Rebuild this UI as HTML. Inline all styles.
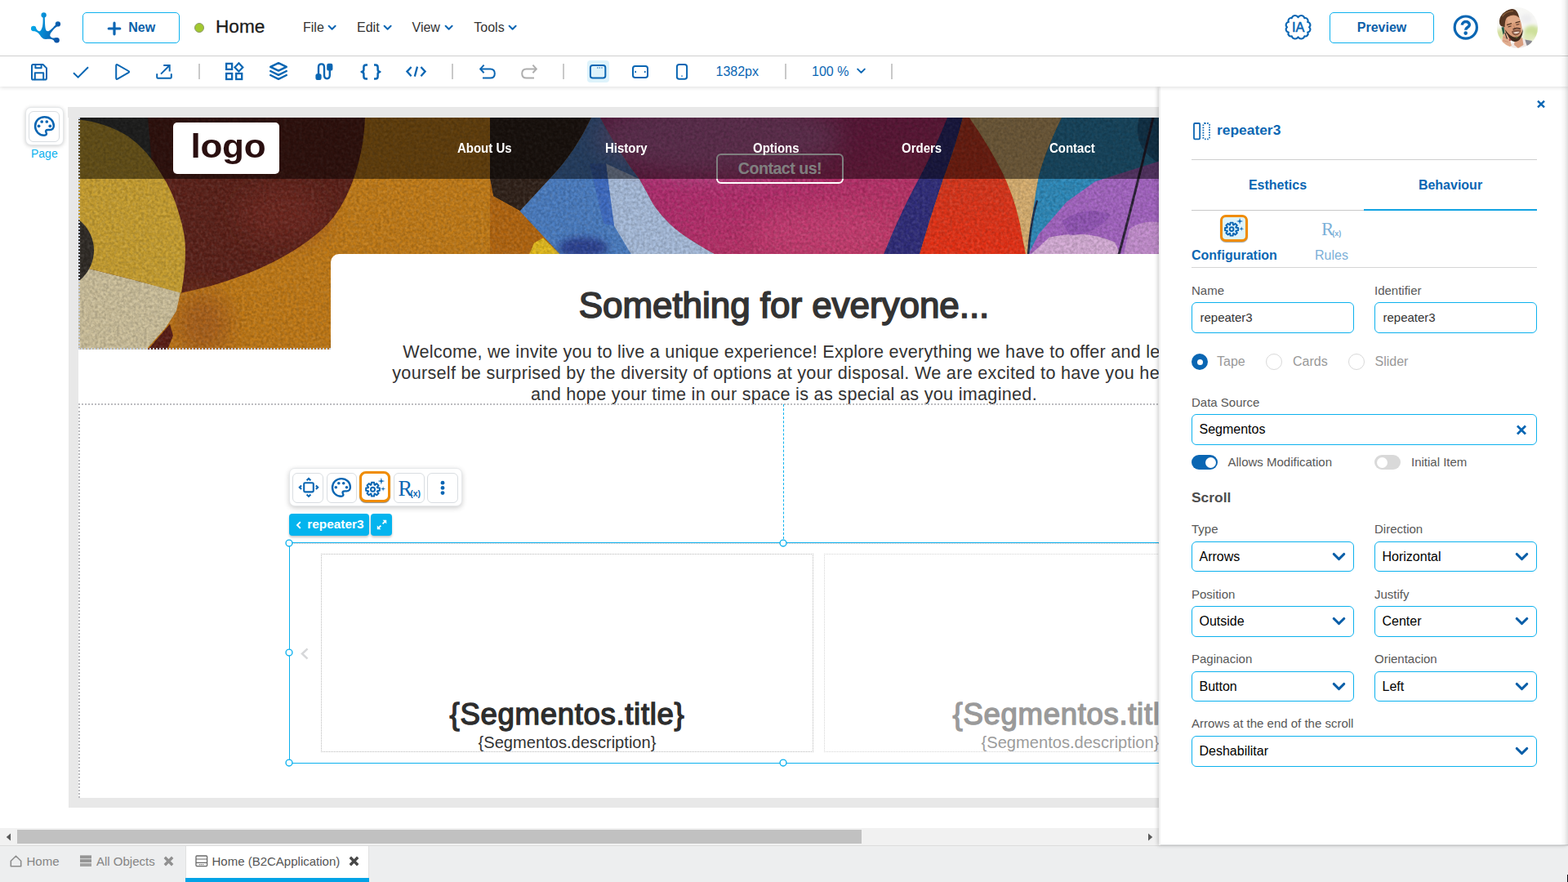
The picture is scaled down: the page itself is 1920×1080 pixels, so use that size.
<!DOCTYPE html>
<html lang="en">
<head>
<meta charset="utf-8">
<title>Home - Modeler</title>
<style>
*{box-sizing:border-box;margin:0;padding:0}
html,body{width:1920px;height:1080px;overflow:hidden;background:#fff;font-family:"Liberation Sans",sans-serif;color:#333}
.abs{position:absolute}
#app{position:relative;width:1920px;height:1080px;overflow:hidden;background:#fff}
/* ---------- header ---------- */
#hdr{position:absolute;left:0;top:0;width:1920px;height:69px;background:#fff;border-bottom:1px solid #cfcfcf}
.btn{position:absolute;border:1px solid #0cb1ee;border-radius:5px;background:#fff;color:#0b5fa9;font-weight:bold;font-size:16px;text-align:center}
.menu{position:absolute;top:24px;font-size:16px;color:#333;line-height:19px;white-space:nowrap}
/* ---------- toolbar ---------- */
#tb{position:absolute;left:0;top:69px;width:1920px;height:37px;background:#fff;box-shadow:0 1px 5px rgba(0,0,0,.14)}
.sep{position:absolute;top:10px;width:2px;height:18px;background:#c9c9c9}
.ic{position:absolute;overflow:visible}
/* ---------- work area ---------- */
#work{position:absolute;left:0;top:0;width:1419px;height:1035px;background:#fff;overflow:hidden}
#pedge{position:absolute;left:1419px;top:106px;width:2px;height:929px;background:#f1f1f1}
#fnotch{position:absolute;left:83px;top:131px;width:1px;height:13px;background:#e8e8e8}
#frame{position:absolute;left:84px;top:131px;width:1420px;height:858px;background:#e8e8e8}
#page{position:absolute;left:96px;top:144px;width:1382px;height:833px;background:#fff;overflow:hidden}
#page .a{position:absolute;white-space:nowrap}
.nav{color:#fff;font-weight:bold;font-size:16.3px;line-height:19px;transform:scaleX(.92);transform-origin:0 0}
.rb{font-family:"Liberation Sans",sans-serif}
/* ---------- right panel ---------- */
#panel{position:absolute;left:1420px;top:106px;width:500px;height:929px;background:#fff;box-shadow:-2px 0 5px rgba(0,0,0,.22);border-bottom:1px solid #dcdee0}
#rstrip{position:absolute;left:1911px;top:0;width:9px;height:1035px;background:linear-gradient(to right,rgba(0,0,0,0),rgba(0,0,0,.035) 50%,rgba(0,0,0,.13))}
#corner{position:absolute;left:1919px;top:1071px;width:1px;height:9px;background:#0a0a14}
.lbl{position:absolute;font-size:15px;color:#585858;line-height:17px;white-space:nowrap}
.inp{position:absolute;height:38px;border:1px solid #0cb1ee;border-radius:6px;background:#fff;font-size:15px;color:#333;line-height:36px;padding-left:9.5px;white-space:nowrap}
.sel{position:absolute;height:37px;border:1px solid #0cb1ee;border-radius:6px;background:#fff;font-size:16px;color:#000;line-height:35px;padding-left:8.5px;white-space:nowrap}
/* ---------- bottom ---------- */
#hscroll{position:absolute;left:0;top:1014px;width:1419px;height:21px;background:#f1f1f1}
#tabs{position:absolute;left:0;top:1035px;width:1920px;height:45px;background:#edeeef;border-top:1px solid #dcdcdc}
.tab{position:absolute;top:0;height:44px;font-size:15px;color:#858585;line-height:38px;white-space:nowrap}
</style>
</head>
<body>
<div id="app">
<svg width="0" height="0" style="position:absolute"><defs>
<symbol id="gearic" viewBox="0 0 26 26" overflow="visible">
 <path d="M8.53 9.64 L8.89 6.85 L12.11 6.85 L12.47 9.64 L13.04 9.88 L15.27 8.16 L17.54 10.43 L15.82 12.66 L16.06 13.23 L18.85 13.59 L18.85 16.81 L16.06 17.17 L15.82 17.74 L17.54 19.97 L15.27 22.24 L13.04 20.52 L12.47 20.76 L12.11 23.55 L8.89 23.55 L8.53 20.76 L7.96 20.52 L5.73 22.24 L3.46 19.97 L5.18 17.74 L4.94 17.17 L2.15 16.81 L2.15 13.59 L4.94 13.23 L5.18 12.66 L3.46 10.43 L5.73 8.16 L7.96 9.88Z" fill="none" stroke="#0a66b3" stroke-width="2" stroke-linejoin="round"/>
 <circle cx="10.5" cy="15.2" r="2.5" fill="none" stroke="#0a66b3" stroke-width="2"/>
 <path d="M20.90 0.80 L21.75 4.25 L25.20 5.10 L21.75 5.95 L20.90 9.40 L20.05 5.95 L16.60 5.10 L20.05 4.25Z" fill="#0a66b3"/>
 <path d="M23.10 11.60 L23.71 14.09 L26.20 14.70 L23.71 15.31 L23.10 17.80 L22.49 15.31 L20.00 14.70 L22.49 14.09Z" fill="#0a66b3"/>
</symbol>
<symbol id="palic" viewBox="0 0 26 26" overflow="visible">
 <path d="M13 2.1C6.6 2.1 2 6.9 2 13C2 19.2 6.8 23.8 12.6 23.8C15 23.8 16 22.4 15 20.6C13.8 18.6 14.8 17.4 17 17.4H19.6C22.2 17.4 23.9 15.4 23.9 12.6C23.9 6.6 19.4 2.1 13 2.1Z" fill="none" stroke="#0a66b3" stroke-width="2.4" stroke-linejoin="round"/>
 <circle cx="6.3" cy="12.8" r="1.8" fill="#0a66b3"/><circle cx="9.8" cy="7.7" r="1.8" fill="#0a66b3"/><circle cx="15.7" cy="7.7" r="1.8" fill="#0a66b3"/><circle cx="19.5" cy="12.8" r="1.8" fill="#0a66b3"/>
</symbol>

</defs></svg>

<!-- WORK AREA -->
<div id="work">
  <div id="frame"></div><div id="fnotch"></div>
  <div id="page">
<svg class="abs" style="left:0;top:0" width="1382" height="284" viewBox="96 144 1382 283" preserveAspectRatio="none">
 <defs>
  <filter id="grain" x="0" y="0" width="100%" height="100%">
   <feTurbulence type="fractalNoise" baseFrequency="0.3" numOctaves="2" seed="7" result="n"/>
   <feColorMatrix in="n" type="matrix" values="0 0 0 0 0  0 0 0 0 0  0 0 0 0 0  1.6 1.6 0 0 -1.15"/>
  </filter>
  <filter id="grain2" x="0" y="0" width="100%" height="100%">
   <feTurbulence type="fractalNoise" baseFrequency="0.27" numOctaves="2" seed="23" result="n"/>
   <feColorMatrix in="n" type="matrix" values="0 0 0 0 1  0 0 0 0 1  0 0 0 0 1  1.5 1.5 0 0 -1.2"/>
  </filter>
  <linearGradient id="gBlue" x1="0" y1="0" x2="1" y2="0"><stop offset="0" stop-color="#3f6fb8"/><stop offset=".45" stop-color="#5f8ccb"/><stop offset=".8" stop-color="#a9bdd9"/><stop offset="1" stop-color="#b9c6da"/></linearGradient>
  <linearGradient id="gMag" x1="0" y1="0" x2="1" y2="1"><stop offset="0" stop-color="#a52b73"/><stop offset=".5" stop-color="#b42d6c"/><stop offset="1" stop-color="#c23a62"/></linearGradient>
  <linearGradient id="gRed" x1="0" y1="0" x2="0" y2="1"><stop offset="0" stop-color="#c83b22"/><stop offset="1" stop-color="#ea3014"/></linearGradient>
  <linearGradient id="gOr" x1="0" y1="0" x2="1" y2="1"><stop offset="0" stop-color="#c5801a"/><stop offset="1" stop-color="#c07512"/></linearGradient>
  <filter id="soft2" x="-50%" y="-50%" width="200%" height="200%"><feGaussianBlur stdDeviation="4"/></filter>
  <filter id="soft" x="-50%" y="-50%" width="200%" height="200%"><feGaussianBlur stdDeviation="14"/></filter>
  <clipPath id="heroclip"><rect x="96" y="144" width="1382" height="283"/></clipPath>
 </defs>
 <g clip-path="url(#heroclip)">
  <rect x="96" y="144" width="1382" height="283" fill="url(#gOr)"/>
  <!-- maroon disc -->
  <path d="M96 144H447C445 200 425 250 400 275C370 305 310 340 222 358L96 340Z" fill="#5b2018"/>
  <ellipse cx="345" cy="262" rx="55" ry="35" fill="#7c2b21" opacity=".5" filter="url(#soft)"/>
  <!-- brownish shade under the disc -->
  <ellipse cx="248" cy="395" rx="34" ry="40" fill="#9a4f1c" opacity=".6" filter="url(#soft)"/>
  <!-- dark grey wedge top-left -->
  <path d="M96 144H181L186 200L96 200Z" fill="#3b3b3a"/>
  <!-- beige wedge (under ring edge) -->
  <path d="M96 325L160 341L221 357Q218 370 216 380L203 400L179 427H96Z" fill="#cfc29d"/>
  <path d="M208 396L212 410L205 427H181Z" fill="#5a1d15"/>
  <!-- yellow ring -->
  <path d="M96 146.5Q130 150 157 167Q181 184 197 212Q212 235 219 261Q227 285 227 306Q227 330 222 358L160 341L96 325Z" fill="#c9a030"/>
  <circle cx="68" cy="306" r="47" fill="#2f2a25"/>
  <!-- dark region -->
  <path d="M600 144H724Q705 185 675 217L637 258L604 240L600 219Z" fill="#2f2018"/>
  <path d="M600 219L604 240L637 258L686 311H600Z" fill="#b4660f"/>
  <path d="M654 297L665 291L686 311H648Z" fill="#e6bd1c"/>
  <!-- blue -->
  <path d="M724 144H735Q760 190 783 219Q792 235 799.4 249Q808 262 819.7 273.3Q832 285 846.8 293.6Q858 301 876 311H686L636.5 258L674.6 217Q705 185 724 144Z" fill="#4a7dc2"/>
  <path d="M742 200L783 219Q792 235 799.4 249Q808 262 819.7 273.3Q832 285 846.8 293.6Q858 301 876 311H773L752 276Q747 240 742 200Z" fill="#a9bedd"/>
  <path d="M722 200L742 200Q747 240 752 276L739 273Q730 235 722 200Z" fill="#3c68c4" opacity=".85"/>
  <ellipse cx="714" cy="303" rx="30" ry="13" fill="#27378a" opacity=".85" filter="url(#soft2)"/>
  <!-- magenta -->
  <path d="M735 144H1165L1085 311H876Q858 301 846.8 293.6Q832 285 819.7 273.3Q808 262 799.4 249Q792 235 783 219Q760 190 735 144Z" fill="url(#gMag)"/>
  <ellipse cx="880" cy="168" rx="150" ry="45" fill="#c583bd" opacity=".55" filter="url(#soft)"/>
  <ellipse cx="1010" cy="285" rx="90" ry="30" fill="#d0457a" opacity=".5" filter="url(#soft)"/>
  <!-- navy stripe -->
  <path d="M1160 144H1179Q1170 180 1155 219Q1138 270 1126 311H1082Q1100 265 1125 219Q1148 175 1160 144Z" fill="#2f2c7a"/>
  <!-- red leaf -->
  <path d="M1179 144H1187Q1212 180 1228 212Q1246 250 1252 290L1256 311H1126Q1138 270 1155 219Q1170 180 1179 144Z" fill="url(#gRed)"/>
  <!-- cream -->
  <path d="M1187 144H1300Q1280 185 1272 215Q1263 262 1259 311H1256L1252 290Q1246 250 1228 212Q1212 180 1187 144Z" fill="#dab171"/>
  <!-- teal -->
  <path d="M1300 144H1478V311H1259Q1263 262 1272 215Q1280 185 1300 144Z" fill="#2d8abb"/>
  <path d="M1395 144H1478V200H1420Q1385 180 1395 144Z" fill="#1f5f8a"/>
  <!-- purple -->
  <path d="M1478 176L1420 197L1341 222L1306 247L1272 286L1259 311H1478Z" fill="#a565c3"/>
  <path d="M1262 311L1285 290Q1330 280 1365 296L1372 311Z" fill="#d7aed8"/>
  <path d="M1376 311L1383 280Q1400 268 1420 272V311Z" fill="#c58fd0"/>
  <path d="M1300 270Q1330 250 1360 262Q1345 285 1310 288Z" fill="#8a4eb0" opacity=".7"/>
  <path d="M1412 144Q1392 230 1370 311" stroke="#2b2136" stroke-width="3" fill="none"/>
  <path d="M1259 311Q1262 270 1270 245" stroke="#1d2c4a" stroke-width="2.5" fill="none"/>
  <!-- grain texture -->
  <rect x="96" y="144" width="1382" height="283" fill="#000" filter="url(#grain)" opacity=".17"/>
  <rect x="96" y="144" width="1382" height="283" fill="#fff" filter="url(#grain2)" opacity=".09"/>
 </g>
</svg>
<!-- contact button (sits beneath nav overlay) -->
<div class="a" style="left:781px;top:44px;width:156px;height:37px;border:2px solid #fff;border-radius:6px;color:#fff;font-weight:bold;font-size:19.6px;line-height:32px;text-align:center;letter-spacing:-.5px">Contact us!</div>
<!-- nav overlay -->
<div class="a" style="left:0;top:0;width:1382px;height:75px;background:rgba(0,0,0,.5)"></div>
<div class="a" style="left:116px;top:6px;width:130px;height:63px;background:#fff;border-radius:5px"></div>
<div class="a" id="logo" style="left:137.6px;top:9.2px;font-weight:bold;font-size:44px;line-height:50px;color:#2a0f10;letter-spacing:-.3px;transform:scaleY(.925);transform-origin:0 40.5px">logo</div>
<div class="a nav" id="n1" style="left:464px;top:27.6px">About Us</div>
<div class="a nav" id="n2" style="left:645px;top:27.6px">History</div>
<div class="a nav" id="n3" style="left:826px;top:27.6px">Options</div>
<div class="a nav" id="n4" style="left:1007.5px;top:27.6px">Orders</div>
<div class="a nav" id="n5" style="left:1189px;top:27.6px">Contact</div>
<!-- left dotted edge of hero -->
<div class="a" style="left:0;top:0;width:0;height:284px;border-left:2px dotted #c8d0e0"></div>
<div class="a" style="left:0;top:282px;width:309px;height:0;border-top:2px dotted #c8d0e0"></div>

<!-- white card -->
<div class="a" style="left:309px;top:167px;width:1100px;height:200px;background:#fff;border-radius:10px 0 0 0"></div>
<div class="a" id="h1" style="left:0;top:200px;width:1728px;text-align:center;font-size:44px;line-height:60px;color:#333;letter-spacing:-.05px;-webkit-text-stroke:1.7px #333;paint-order:stroke fill">Something for everyone...</div>
<div class="a" id="p1" style="left:0;top:274px;width:1728px;text-align:center;font-size:21.6px;line-height:26px;color:#333;letter-spacing:.245px">Welcome, we invite you to live a unique experience! Explore everything we have to offer and let</div>
<div class="a" id="p2" style="left:0;top:300px;width:1728px;text-align:center;font-size:21.6px;line-height:26px;color:#333;letter-spacing:.3px">yourself be surprised by the diversity of options at your disposal. We are excited to have you here</div>
<div class="a" id="p3" style="left:0;top:326px;width:1728px;text-align:center;font-size:21.6px;line-height:26px;color:#333;letter-spacing:.3px">and hope your time in our space is as special as you imagined.</div>
<!-- section dotted borders -->
<div class="a" style="left:0;top:350px;width:1382px;height:0;border-top:2px dotted #bcbcc0"></div>
<div class="a" style="left:0;top:354px;width:0;height:479px;border-left:2px dotted #bcbcc0"></div>
<div class="a" style="left:863px;top:351px;width:0;height:170px;border-left:1px dashed #0cb1ee"></div>
<div class="a" style="left:258px;top:429px;width:212px;height:47px;background:#fff;border:1px solid #e6e8ea;border-radius:7px;box-shadow:0 2px 6px rgba(0,0,0,.2)"></div>
<div class="a" style="left:262.2px;top:434.5px;width:37.4px;height:37.4px;background:#fff;border:1px solid #d9dde1;border-radius:6px"></div>
<div class="a" style="left:304.1px;top:434.5px;width:37.4px;height:37.4px;background:#fff;border:1px solid #d9dde1;border-radius:6px"></div>
<div class="a" style="left:386.2px;top:434.5px;width:37.4px;height:37.4px;background:#fff;border:1px solid #d9dde1;border-radius:6px"></div>
<div class="a" style="left:427.4px;top:434.5px;width:37.4px;height:37.4px;background:#fff;border:1px solid #d9dde1;border-radius:6px"></div>
<div class="a" style="left:344.3px;top:433.2px;width:37.6px;height:38.2px;background:#fff;border:3.4px solid #f08c00;border-radius:8px;box-shadow:0 1px 1px rgba(0,0,0,.45)"></div>
<svg class="a" style="left:268.5px;top:440px" width="26" height="26" viewBox="0 0 26 26" overflow="visible">
 <rect x="7.2" y="7.2" width="11.6" height="11.2" rx="1.4" fill="none" stroke="#0a66b3" stroke-width="2.1"/>
 <path d="M10.6 4.2L13 1.9L15.4 4.2M10.6 21.6L13 23.9L15.4 21.6M4.1 10.5L1.8 12.8L4.1 15.1M21.9 10.5L24.2 12.8L21.9 15.1" fill="none" stroke="#0a66b3" stroke-width="2.1" stroke-linejoin="miter"/>
</svg>
<svg class="a" style="left:309px;top:440.3px" width="26" height="26" viewBox="0 0 26 26" overflow="visible"><use href="#palic"/></svg>
<svg class="a" style="left:350px;top:440px" width="26" height="26" viewBox="0 0 26 26" overflow="visible"><use href="#gearic"/></svg>
<div class="a" style="left:391.5px;top:438.5px;font-family:'Liberation Serif',serif;font-size:26.5px;line-height:30px;color:#0a66b3;letter-spacing:-1px">R<span style="font-family:'Liberation Sans',sans-serif;font-size:10.5px;font-weight:bold;letter-spacing:0;position:relative;top:1.5px;left:-2px">(x)</span></div>
<svg class="a" style="left:442.5px;top:444px" width="6" height="19" viewBox="0 0 6 19"><circle cx="3" cy="3.2" r="2.4" fill="#0a66b3"/><circle cx="3" cy="9.4" r="2.4" fill="#0a66b3"/><circle cx="3" cy="15.6" r="2.4" fill="#0a66b3"/></svg>
<div class="a" style="left:258px;top:485.1px;width:98px;height:27px;background:#04b4ee;border-radius:4px;box-shadow:0 2px 3px rgba(0,0,0,.22)"></div>
<svg class="a" style="left:265.5px;top:493.5px" width="8" height="10" viewBox="0 0 8 10"><path d="M5.8 1.2L2 5L5.8 8.8" fill="none" stroke="#fff" stroke-width="1.9"/></svg>
<div class="a" id="tagtxt" style="left:280.2px;top:488.9px;color:#fff;font-weight:bold;font-size:15.4px;line-height:18px">repeater3</div>
<div class="a" style="left:358.2px;top:485.1px;width:26px;height:27px;background:#04b4ee;border-radius:4px;box-shadow:0 2px 3px rgba(0,0,0,.22)"></div>
<svg class="a" style="left:363.6px;top:491.2px" width="15" height="15" viewBox="0 0 15 15"><path d="M3.6 11.4L6.4 8.6M8.6 6.4L11.4 3.6" stroke="#fff" stroke-width="1.8" fill="none"/><path d="M8.6 1.8H13.2V6.4ZM1.8 8.6V13.2H6.4Z" fill="#fff"/></svg>
<div class="a" style="left:259px;top:521px;width:1210px;height:269px;border-top:1px dotted #c8bcbc"></div>
<div class="a" style="left:258px;top:520px;width:1212px;height:271px;border:1px solid #0cb1ee"></div>
<div class="a" style="left:297px;top:534px;width:603px;height:243px;border:1px dotted #b9b9b9"></div>
<div class="a" style="left:913px;top:534px;width:603px;height:243px;border:1px dotted #d5d5d5"></div>
<svg class="a" style="left:252.4px;top:514.9px" width="12" height="12" viewBox="0 0 12 12"><circle cx="6" cy="6" r="3.95" fill="#fff" stroke="#0cb1ee" stroke-width="1.35"/></svg>
<svg class="a" style="left:857.4px;top:514.9px" width="12" height="12" viewBox="0 0 12 12"><circle cx="6" cy="6" r="3.95" fill="#fff" stroke="#0cb1ee" stroke-width="1.35"/></svg>
<svg class="a" style="left:252.4px;top:649.4px" width="12" height="12" viewBox="0 0 12 12"><circle cx="6" cy="6" r="3.95" fill="#fff" stroke="#0cb1ee" stroke-width="1.35"/></svg>
<svg class="a" style="left:252.4px;top:784.4px" width="12" height="12" viewBox="0 0 12 12"><circle cx="6" cy="6" r="3.95" fill="#fff" stroke="#0cb1ee" stroke-width="1.35"/></svg>
<svg class="a" style="left:857.4px;top:784.4px" width="12" height="12" viewBox="0 0 12 12"><circle cx="6" cy="6" r="3.95" fill="#fff" stroke="#0cb1ee" stroke-width="1.35"/></svg>
<svg class="a" style="left:271px;top:647.6px" width="12" height="17" viewBox="0 0 12 17"><path d="M9.5 2.4L3 8.5L9.5 14.6" fill="none" stroke="#d6d7d9" stroke-width="2.5"/></svg>
<div class="a" id="t1" style="left:297px;top:709px;width:603px;text-align:center;font-size:36.6px;line-height:44px;color:#2d2d2d;letter-spacing:.66px;-webkit-text-stroke:1.4px #2d2d2d;paint-order:stroke fill">{Segmentos.title}</div>
<div class="a" id="d1" style="left:297px;top:753px;width:603px;text-align:center;font-size:20.1px;line-height:24px;color:#333">{Segmentos.description}</div>
<div class="a" id="t2" style="left:913px;top:709px;width:603px;text-align:center;font-size:36.6px;line-height:44px;color:#9a9a9a;letter-spacing:.66px;-webkit-text-stroke:1.4px #9a9a9a;paint-order:stroke fill">{Segmentos.title}</div>
<div class="a" id="d2" style="left:913px;top:753px;width:603px;text-align:center;font-size:20.1px;line-height:24px;color:#9c9c9c">{Segmentos.description}</div>


  </div>
<div class="abs" style="left:31px;top:130.6px;width:47.2px;height:47.2px;background:#fff;border:1px solid #e4e6e8;border-radius:7px;box-shadow:0 1px 5px rgba(0,0,0,.2)"></div>
<div class="abs" style="left:35.3px;top:136.2px;width:37.6px;height:37.6px;background:#fff;border:1px solid #d9dde1;border-radius:6px"></div>
<svg class="abs" style="left:41px;top:141.2px" width="27" height="27" viewBox="0 0 26 26" overflow="visible"><use href="#palic"/></svg>
<div class="abs" style="left:38px;top:180px;font-size:14px;line-height:17px;color:#0cb1ee;white-space:nowrap">Page</div>

</div>

<!-- BOTTOM -->
<div id="hscroll"><div class="abs" style="left:21px;top:2px;width:1034px;height:17px;background:#c1c1c1"></div>
<svg class="abs" style="left:7px;top:5.5px" width="7" height="10" viewBox="0 0 7 10"><path d="M6 .5V9.5L.8 5Z" fill="#5a5a5a"/></svg>
<svg class="abs" style="left:1405px;top:5.5px" width="7" height="10" viewBox="0 0 7 10"><path d="M1 .5V9.5L6.2 5Z" fill="#5a5a5a"/></svg>
</div>
<div id="tabs"><svg class="abs" style="left:12px;top:10.6px" width="15" height="15" viewBox="0 0 15 15"><path d="M1.3 7.3L7.5 1.2L13.7 7.3V13.7H1.3Z" fill="none" stroke="#8e8e8e" stroke-width="1.6" stroke-linejoin="round"/></svg>
<div class="tab" style="left:32.5px;top:0">Home</div>
<svg class="abs" style="left:97px;top:11px" width="16" height="14" viewBox="0 0 16 14"><path d="M1 1.4H15M1 3.4H15M1 6.2H15M1 8.2H15M1 11H15M1 13H15" stroke="#8a8a8a" stroke-width="1.7"/></svg>
<div class="tab" style="left:118px;top:0">All Objects</div>
<svg class="abs" style="left:200px;top:12px" width="13" height="13" viewBox="0 0 13 13"><path d="M1.8 1.8L11.2 11.2M11.2 1.8L1.8 11.2" stroke="#909090" stroke-width="3.4" fill="none"/></svg>
<div class="abs" style="left:227px;top:0;width:224.5px;height:45px;background:#fff;border-left:1px solid #e1e1e1;border-right:1px solid #e1e1e1"></div>
<div class="abs" style="left:227px;top:39px;width:224.5px;height:6px;background:#03a3e6"></div>
<svg class="abs" style="left:238.5px;top:10.5px" width="16" height="15" viewBox="0 0 16 15"><rect x="1" y="1" width="13.6" height="12.6" rx="1" fill="none" stroke="#6a6a6a" stroke-width="1.3"/><path d="M1 5H14.6M1 9.4H14.6" stroke="#6a6a6a" stroke-width="1.1"/><path d="M5 11.6H10.6" stroke="#6a6a6a" stroke-width="1.2" stroke-dasharray="1.4 .8"/></svg>
<div class="tab" style="left:259.5px;top:0;color:#555">Home (B2CApplication)</div>
<svg class="abs" style="left:427px;top:12px" width="13" height="13" viewBox="0 0 13 13"><path d="M1.8 1.8L11.2 11.2M11.2 1.8L1.8 11.2" stroke="#484848" stroke-width="3.4" fill="none"/></svg>
</div>

<!-- RIGHT PANEL -->
<div id="panel"><svg class="ic" style="left:461px;top:15.5px" width="12" height="11" viewBox="0 0 12 11"><path d="M2 1.6L10 9.4M10 1.6L2 9.4" stroke="#0a66b3" stroke-width="2.4" fill="none"/></svg>
<svg class="ic" style="left:40px;top:43px" width="24" height="24" viewBox="0 0 24 24">
 <rect x="2" y="2" width="7.2" height="19.4" rx="1.2" fill="none" stroke="#0a66b3" stroke-width="1.8"/>
 <rect x="13.4" y="2" width="7.6" height="19.4" rx="1.6" fill="none" stroke="#0a66b3" stroke-width="1.8" stroke-dasharray="1.6 1.5"/>
</svg>
<div class="abs" style="left:70px;top:43.2px;font-size:17.4px;font-weight:bold;color:#0a66b3;line-height:20px;white-space:nowrap">repeater3</div>
<div class="abs" style="left:39px;top:89px;width:423px;height:1px;background:#cfcfcf"></div>
<div class="abs" style="left:39px;top:111px;width:211px;text-align:center;font-size:16px;font-weight:bold;color:#0a66b3;line-height:19px">Esthetics</div>
<div class="abs" style="left:250px;top:111px;width:212px;text-align:center;font-size:16px;font-weight:bold;color:#0a66b3;line-height:19px">Behaviour</div>
<div class="abs" style="left:39px;top:150.5px;width:423px;height:1px;background:#c9c9c9"></div>
<div class="abs" style="left:250px;top:150px;width:212px;height:2px;background:#12a3e2"></div>
<div class="abs" style="left:74px;top:157px;width:34px;height:33px;border:3px solid #f08c00;border-radius:7px;background:#dff3fb;box-shadow:0 1px 1px rgba(0,0,0,.35)"></div>
<svg class="ic" style="left:78.3px;top:160.3px" width="25" height="25" viewBox="0 0 26 26"><use href="#gearic"/></svg>
<div class="abs" style="left:39px;top:196.5px;font-size:16px;font-weight:bold;color:#0a66b3;line-height:19px;white-space:nowrap">Configuration</div>
<div class="abs" style="left:198px;top:161.5px;font-family:'Liberation Serif',serif;font-size:23px;line-height:26px;color:#7cb0d8;white-space:nowrap;letter-spacing:-1px">R<span style="font-family:'Liberation Sans',sans-serif;font-size:9px;font-weight:bold;letter-spacing:0;position:relative;top:1px;left:-1px">(x)</span></div>
<div class="abs" style="left:190px;top:196.5px;font-size:16px;color:#7cb0d8;line-height:19px;white-space:nowrap">Rules</div>
<div class="abs" style="left:39px;top:221px;width:423px;height:1px;background:#d5d5d5"></div>
<div class="lbl" style="left:39px;top:241.3px">Name</div>
<div class="lbl" style="left:263px;top:241.3px">Identifier</div>
<div class="inp" style="left:39px;top:264px;width:199px">repeater3</div>
<div class="inp" style="left:263px;top:264px;width:199px">repeater3</div>
<div class="abs" style="left:39px;top:327px;width:20px;height:20px;border-radius:50%;background:#0a66b3"></div><div class="abs" style="left:45.5px;top:333.5px;width:7px;height:7px;border-radius:50%;background:#fff"></div><div class="abs" style="left:70px;top:327px;font-size:16px;line-height:19px;color:#999;white-space:nowrap">Tape</div>
<div class="abs" style="left:130px;top:327px;width:20px;height:20px;border-radius:50%;background:#fff;border:1px solid #d9d9d9"></div><div class="abs" style="left:163px;top:327px;font-size:16px;line-height:19px;color:#999;white-space:nowrap">Cards</div>
<div class="abs" style="left:231px;top:327px;width:20px;height:20px;border-radius:50%;background:#fff;border:1px solid #d9d9d9"></div><div class="abs" style="left:263.5px;top:327px;font-size:16px;line-height:19px;color:#999;white-space:nowrap">Slider</div>
<div class="lbl" style="left:39px;top:377.9px">Data Source</div>
<div class="sel" style="left:39px;top:401px;width:423px;height:38px;line-height:35px">Segmentos<svg class="ic" style="right:11px;top:12px" width="14" height="13" viewBox="0 0 14 13"><path d="M2 1.6L12 11.4M12 1.6L2 11.4" stroke="#0a66b3" stroke-width="2.8" fill="none"/></svg></div>
<div class="abs" style="left:39px;top:451px;width:32px;height:18px;border-radius:9px;background:#0a66b3"></div>
<div class="abs" style="left:55.5px;top:453.5px;width:13px;height:13px;border-radius:50%;background:#fff"></div>
<div class="lbl" style="left:83.5px;top:450.8px">Allows Modification</div>
<div class="abs" style="left:263px;top:451px;width:32px;height:18px;border-radius:9px;background:#d9d9d9"></div>
<div class="abs" style="left:265.5px;top:453.5px;width:13px;height:13px;border-radius:50%;background:#fff"></div>
<div class="lbl" style="left:308px;top:450.8px">Initial Item</div>
<div class="abs" style="left:39px;top:492.8px;font-size:17.4px;font-weight:bold;color:#4d4d4d;line-height:20px;white-space:nowrap">Scroll</div>
<div class="lbl" style="left:39px;top:533.3px">Type</div>
<div class="lbl" style="left:263px;top:533.3px">Direction</div>
<div class="sel" style="left:39px;top:557px;width:199px;height:37px">Arrows<svg class="ic" style="right:9px;top:12px" width="17" height="12" viewBox="0 0 17 12"><path d="M2.2 2.4L8.5 8.6L14.8 2.4" fill="none" stroke="#0a5ea8" stroke-width="2.9" stroke-linecap="round" stroke-linejoin="round"/></svg></div>
<div class="sel" style="left:263px;top:557px;width:199px;height:37px">Horizontal<svg class="ic" style="right:9px;top:12px" width="17" height="12" viewBox="0 0 17 12"><path d="M2.2 2.4L8.5 8.6L14.8 2.4" fill="none" stroke="#0a5ea8" stroke-width="2.9" stroke-linecap="round" stroke-linejoin="round"/></svg></div>
<div class="lbl" style="left:39px;top:612.7px">Position</div>
<div class="lbl" style="left:263px;top:612.7px">Justify</div>
<div class="sel" style="left:39px;top:636px;width:199px;height:38px">Outside<svg class="ic" style="right:9px;top:12px" width="17" height="12" viewBox="0 0 17 12"><path d="M2.2 2.4L8.5 8.6L14.8 2.4" fill="none" stroke="#0a5ea8" stroke-width="2.9" stroke-linecap="round" stroke-linejoin="round"/></svg></div>
<div class="sel" style="left:263px;top:636px;width:199px;height:38px">Center<svg class="ic" style="right:9px;top:12px" width="17" height="12" viewBox="0 0 17 12"><path d="M2.2 2.4L8.5 8.6L14.8 2.4" fill="none" stroke="#0a5ea8" stroke-width="2.9" stroke-linecap="round" stroke-linejoin="round"/></svg></div>
<div class="lbl" style="left:39px;top:691.9px">Paginacion</div>
<div class="lbl" style="left:263px;top:691.9px">Orientacion</div>
<div class="sel" style="left:39px;top:716px;width:199px;height:37px">Button<svg class="ic" style="right:9px;top:12px" width="17" height="12" viewBox="0 0 17 12"><path d="M2.2 2.4L8.5 8.6L14.8 2.4" fill="none" stroke="#0a5ea8" stroke-width="2.9" stroke-linecap="round" stroke-linejoin="round"/></svg></div>
<div class="sel" style="left:263px;top:716px;width:199px;height:37px">Left<svg class="ic" style="right:9px;top:12px" width="17" height="12" viewBox="0 0 17 12"><path d="M2.2 2.4L8.5 8.6L14.8 2.4" fill="none" stroke="#0a5ea8" stroke-width="2.9" stroke-linecap="round" stroke-linejoin="round"/></svg></div>
<div class="lbl" style="left:39px;top:771.4px">Arrows at the end of the scroll</div>
<div class="sel" style="left:39px;top:795px;width:423px;height:38px">Deshabilitar<svg class="ic" style="right:9px;top:12px" width="17" height="12" viewBox="0 0 17 12"><path d="M2.2 2.4L8.5 8.6L14.8 2.4" fill="none" stroke="#0a5ea8" stroke-width="2.9" stroke-linecap="round" stroke-linejoin="round"/></svg></div>
</div>
<div id="pedge"></div>

<!-- TOOLBAR -->
<div id="tb"><svg class="ic" style="left:37px;top:8px" width="22" height="22" viewBox="0 0 22 22">
 <path d="M3.6 2H15.6L20 6.4V18.4Q20 20.6 17.8 20.6H3.6Q2 20.6 2 19V3.6Q2 2 3.6 2Z" fill="none" stroke="#0a66b3" stroke-width="2" stroke-linecap="round" stroke-linejoin="round"/>
 <path d="M6.4 2.4V6.2H13.6V2.4" fill="none" stroke="#0a66b3" stroke-width="2" stroke-linecap="round" stroke-linejoin="round" stroke-linecap="butt"/><path d="M5.8 20.2V12.2H16.2V20.2" fill="none" stroke="#0a66b3" stroke-width="2" stroke-linecap="round" stroke-linejoin="round" stroke-linecap="butt"/>
</svg>
<svg class="ic" style="left:88px;top:11px" width="22" height="16" viewBox="0 0 22 16"><path d="M2 9.2L7.6 14.6L20 2.2" fill="none" stroke="#0a66b3" stroke-width="2" stroke-linejoin="miter"/></svg>
<svg class="ic" style="left:140px;top:8px" width="20" height="22" viewBox="0 0 20 22"><path d="M2.2 3.4Q2.2 1.4 4 2.4L17.4 10Q18.8 11 17.4 11.9L4 19.6Q2.2 20.6 2.2 18.6Z" fill="none" stroke="#0a66b3" stroke-width="2" stroke-linecap="round" stroke-linejoin="round"/></svg>
<svg class="ic" style="left:190px;top:9px" width="22" height="20" viewBox="0 0 22 20">
 <path d="M2.2 13V16.6Q2.2 17.8 3.4 17.8H18.6Q19.8 17.8 19.8 16.6V13" fill="none" stroke="#0a66b3" stroke-width="2" stroke-linecap="round" stroke-linejoin="round" stroke-linecap="butt"/>
 <path d="M7 12.6L17.4 2.2M10.2 1.9H17.7V9.4" fill="none" stroke="#0a66b3" stroke-width="2" stroke-linejoin="miter"/>
</svg>
<div class="sep" style="left:243px;top:9px;height:19px"></div>
<svg class="ic" style="left:275px;top:6px" width="24" height="24" viewBox="0 0 24 24">
 <rect x="2.1" y="2.9" width="7" height="7" fill="none" stroke="#0a66b3" stroke-width="2.3"/>
 <rect x="2.1" y="15" width="7" height="7" fill="none" stroke="#0a66b3" stroke-width="2.3"/>
 <rect x="14.2" y="15" width="7" height="7" fill="none" stroke="#0a66b3" stroke-width="2.3"/>
 <path d="M17.4 2.3L22.3 7.4L17.4 12.5L12.5 7.4Z" fill="none" stroke="#0a66b3" stroke-width="2.2" stroke-linejoin="miter"/>
</svg>
<svg class="ic" style="left:329px;top:6px" width="24" height="24" viewBox="0 0 24 24">
 <path d="M12 2.2L21.8 6.9L12 11.6L2.2 6.9Z" fill="none" stroke="#0a66b3" stroke-width="2.4" stroke-linejoin="round"/>
 <path d="M2.2 12L12 16.8L21.8 12M2.2 17L12 21.8L21.8 17" fill="none" stroke="#0a66b3" stroke-width="2.4" stroke-linejoin="round" stroke-linecap="round"/>
</svg>
<svg class="ic" style="left:385px;top:7px" width="24" height="23" viewBox="0 0 24 23">
 <path d="M5 15.4V6.4Q5 2.4 8.6 2.4Q12 2.4 12 6.4V16Q12 20.2 15.4 20.2Q18.8 20.2 18.8 16V10" fill="none" stroke="#0a66b3" stroke-width="2.4"/>
 <rect x="1.4" y="14.2" width="7.2" height="7.8" rx="2.2" fill="#0a66b3"/>
 <rect x="15.2" y="1.8" width="7.2" height="8.8" rx="2.2" fill="#0a66b3"/>
</svg>
<svg class="ic" style="left:440px;top:8px" width="28" height="22" viewBox="0 0 28 22">
 <path d="M10 2.4H8.2Q5.4 2.4 5.4 5.2V8.2Q5.4 10.6 2.6 10.9Q5.4 11.2 5.4 13.6V16.8Q5.4 19.6 8.2 19.6H10" fill="none" stroke="#0a66b3" stroke-width="2.5" stroke-linejoin="round"/>
 <path d="M18 2.4H19.8Q22.6 2.4 22.6 5.2V8.2Q22.6 10.6 25.4 10.9Q22.6 11.2 22.6 13.6V16.8Q22.6 19.6 19.8 19.6H18" fill="none" stroke="#0a66b3" stroke-width="2.5" stroke-linejoin="round"/>
</svg>
<svg class="ic" style="left:496px;top:11px" width="28" height="16" viewBox="0 0 28 16">
 <path d="M7.6 2L2.4 7.6L7.6 13.2M19.4 2L24.6 7.6L19.4 13.2M15 1.6L11.8 13.6" fill="none" stroke="#0a66b3" stroke-width="2.3" stroke-linejoin="miter"/>
</svg>
<div class="sep" style="left:553px;top:9px;height:19px"></div>
<svg class="ic" style="left:586px;top:8px" width="22" height="22" viewBox="0 0 22 22"><g >
 <path d="M6.6 2.6L2.2 7.4L6.6 12.2" fill="none" stroke="#0a66b3" stroke-width="2" stroke-linejoin="miter"/>
 <path d="M2.6 7.4H14.4Q19.8 7.4 19.8 13Q19.8 18.6 14.4 18.6H5" fill="none" stroke="#0a66b3" stroke-width="2"/></g>
</svg>
<svg class="ic" style="left:637px;top:8px" width="22" height="22" viewBox="0 0 22 22"><g transform="translate(22,0) scale(-1,1)">
 <path d="M6.6 2.6L2.2 7.4L6.6 12.2" fill="none" stroke="#aeaeae" stroke-width="2" stroke-linejoin="miter"/>
 <path d="M2.6 7.4H14.4Q19.8 7.4 19.8 13Q19.8 18.6 14.4 18.6H5" fill="none" stroke="#aeaeae" stroke-width="2"/></g>
</svg>
<div class="sep" style="left:689px;top:9px;height:19px"></div>
<div class="abs" style="left:719px;top:5px;width:27px;height:27px;border-radius:4px;background:#def3fb"></div>
<svg class="ic" style="left:721px;top:9px" width="22" height="20" viewBox="0 0 22 20">
 <rect x="1.9" y="2" width="18.4" height="15.6" rx="2.8" fill="none" stroke="#0a66b3" stroke-width="2"/>
 <path d="M10 5H11.4M12.6 5H14M15.2 5H16.6" stroke="#0a66b3" stroke-width="1.1"/>
</svg>
<svg class="ic" style="left:773px;top:10px" width="22" height="18" viewBox="0 0 22 18">
 <rect x="2" y="1.9" width="18" height="14.2" rx="2.8" fill="none" stroke="#0a66b3" stroke-width="2"/>
 <ellipse cx="5.2" cy="9" rx="0.9" ry="1.3" fill="#0a66b3"/><ellipse cx="16.8" cy="9" rx="0.9" ry="1.3" fill="#0a66b3"/>
</svg>
<svg class="ic" style="left:827px;top:8px" width="16" height="22" viewBox="0 0 16 22">
 <rect x="1.9" y="2" width="12.2" height="17.8" rx="2.8" fill="none" stroke="#0a66b3" stroke-width="2"/>
 <path d="M7.2 16.2H8.8" stroke="#0a66b3" stroke-width="1.2"/>
</svg>
<div class="abs" style="left:876.5px;top:9px;font-size:16px;line-height:19px;color:#0a66b3;white-space:nowrap">1382px</div>
<div class="sep" style="left:961px;top:9px;height:19px"></div>
<div class="abs" style="left:994px;top:9px;font-size:16px;line-height:19px;color:#0a66b3;white-space:nowrap">100 %</div>
<svg class="ic" style="left:1049px;top:14px" width="11" height="8" viewBox="0 0 11 8"><path d="M1.2 1.6L5.5 5.9L9.8 1.6" fill="none" stroke="#0a66b3" stroke-width="2" stroke-linecap="round" stroke-linejoin="round"/></svg>
<div class="sep" style="left:1091px;top:9px;height:19px"></div>
</div>

<!-- HEADER -->
<div id="hdr">
<svg class="ic" style="left:36px;top:14px" width="40" height="40" viewBox="0 0 40 40">
 <defs><linearGradient id="lg1" gradientUnits="userSpaceOnUse" x1="2" y1="18" x2="37" y2="26"><stop offset="0" stop-color="#05aaea"/><stop offset="0.45" stop-color="#0586d0"/><stop offset="1" stop-color="#0a52a4"/></linearGradient></defs>
 <g fill="url(#lg1)">
  <path d="M16.6 7C16.6 12 16.9 18 14.7 21.9C13.8 23.6 13 24.3 12.3 24.3C10.8 24.3 9.4 22.8 8.2 20.8L5.5 24C8 24.4 10 25.6 11.5 27.3C13.5 29.8 15 32.4 17.1 33.5C19 34.3 23 33.6 25.3 33.7C27.5 33.9 29.3 34.6 30.6 36.4L32.5 32C30.6 32.8 28.5 32.6 27.2 32C25.8 31.2 25 30.2 25.3 29.1C25.6 27.4 26 26.6 26.7 25.8C28 24 29.4 22 30.6 20.96C31.8 19.8 33 19 33.96 18.55L32.5 16.6C31 17.4 30.3 18.3 29.6 19C28 20.6 26.5 22.2 25.3 22.9C24 23.8 22.8 24.4 21.9 24.1C21 23.8 20.4 23 20 21.9C19 19 19 12 18.8 7Z"/>
  <circle cx="17.6" cy="4.4" r="3.15"/>
  <circle cx="5.1" cy="21" r="3.15"/>
  <circle cx="34.9" cy="15.4" r="3.15"/>
  <circle cx="33.5" cy="35.2" r="3.3"/>
 </g>
</svg>
<div class="btn" style="left:101px;top:15px;width:119px;height:38px;line-height:35px">
 <svg class="ic" style="left:30.4px;top:10.6px" width="16" height="16" viewBox="0 0 16 16"><path d="M8 1.2V14.8M1.2 8H14.8" stroke="#0a66b3" stroke-width="3.2" stroke-linecap="round"/></svg>
 <span style="position:absolute;left:55.2px;top:0">New</span>
</div>
<div class="abs" style="left:238px;top:28px;width:12px;height:12px;border-radius:50%;background:#a2c82f;border:1px solid #8d9a6a"></div>
<div class="abs" style="left:264px;top:19px;font-size:22.6px;line-height:28px;color:#1c1c1c;white-space:nowrap;-webkit-text-stroke:.3px #1c1c1c">Home</div>
<div class="menu" style="left:371px">File</div>
<svg class="ic" style="left:401.4px;top:30px" width="11" height="8" viewBox="0 0 11 8"><path d="M1.6 1.7L5.6 5.7L9.6 1.7" fill="none" stroke="#0a66b3" stroke-width="2" stroke-linecap="round" stroke-linejoin="round"/></svg>
<div class="menu" style="left:437px">Edit</div>
<svg class="ic" style="left:469.4px;top:30px" width="11" height="8" viewBox="0 0 11 8"><path d="M1.6 1.7L5.6 5.7L9.6 1.7" fill="none" stroke="#0a66b3" stroke-width="2" stroke-linecap="round" stroke-linejoin="round"/></svg>
<div class="menu" style="left:504.5px">View</div>
<svg class="ic" style="left:544.4px;top:30px" width="11" height="8" viewBox="0 0 11 8"><path d="M1.6 1.7L5.6 5.7L9.6 1.7" fill="none" stroke="#0a66b3" stroke-width="2" stroke-linecap="round" stroke-linejoin="round"/></svg>
<div class="menu" style="left:580.3px">Tools</div>
<svg class="ic" style="left:622.2px;top:30px" width="11" height="8" viewBox="0 0 11 8"><path d="M1.6 1.7L5.6 5.7L9.6 1.7" fill="none" stroke="#0a66b3" stroke-width="2" stroke-linecap="round" stroke-linejoin="round"/></svg>

<svg class="ic" style="left:1571px;top:15px" width="37" height="37" viewBox="0 0 37 37">
 <path d="M18.55 6.24A4.2 4.2 0 0 1 26.35 7.2A3.3 3.3 0 0 1 30.2 12.02A3.5 3.5 0 0 1 32.04 18.28A3.5 3.5 0 0 1 30.2 24.54A3.3 3.3 0 0 1 26.35 29.35A4.2 4.2 0 0 1 18.55 30.31A4.2 4.2 0 0 1 10.75 29.35A3.3 3.3 0 0 1 6.9 24.54A3.5 3.5 0 0 1 5.06 18.28A3.5 3.5 0 0 1 6.9 12.02A3.3 3.3 0 0 1 10.75 7.2A4.2 4.2 0 0 1 18.55 6.24Z" fill="none" stroke="#0a66b3" stroke-width="2.1" stroke-linejoin="round"/>
 <text x="18.7" y="23.8" text-anchor="middle" font-family="Liberation Sans, sans-serif" font-size="16.2" fill="#0a66b3" stroke="#0a66b3" stroke-width=".55">IA</text>
</svg>
<div class="btn" style="left:1628px;top:15px;width:128px;height:38px;line-height:35px">Preview</div>
<svg class="ic" style="left:1778px;top:17px" width="34" height="34" viewBox="0 0 34 34">
 <circle cx="16.8" cy="16.6" r="13.6" fill="none" stroke="#0a66b3" stroke-width="3.2"/>
 <path d="M12.3 13.6 C12.6 8.2 21.6 8.2 21.3 13.6 C21.0 16.6 16.7 16.6 16.7 19.7" fill="none" stroke="#0a66b3" stroke-width="3.5" stroke-linecap="butt"/>
 <circle cx="16.7" cy="23.6" r="2.3" fill="#0a66b3"/>
</svg>
<svg class="ic" style="left:1833px;top:9px" width="50" height="50" viewBox="0 0 50 50">
 <defs>
  <clipPath id="avc"><circle cx="25" cy="25" r="25"/></clipPath>
  <filter id="avb" x="-20%" y="-20%" width="140%" height="140%"><feGaussianBlur stdDeviation="0.55"/></filter>
  <filter id="avb2" x="-20%" y="-20%" width="140%" height="140%"><feGaussianBlur stdDeviation="2.2"/></filter>
 </defs>
 <g clip-path="url(#avc)">
  <rect width="50" height="50" fill="#f7f7f5"/>
  <g filter="url(#avb2)">
   <ellipse cx="43" cy="30" rx="10" ry="8" fill="#cde09a"/>
   <ellipse cx="39" cy="37" rx="8" ry="5" fill="#dde8b4"/>
   <ellipse cx="4" cy="33" rx="6" ry="7" fill="#d4e0a0"/>
   <ellipse cx="36" cy="14" rx="7" ry="6" fill="#ececee"/>
  </g>
  <g filter="url(#avb)">
   <path d="M34 39.5L43 41L40 50H30Z" fill="#8a8991"/>
   <path d="M17 45L24 41L34 38.5L37 48L30 52H18Z" fill="#f1e7e4"/>
   <path d="M22 39L31 37L32.5 46L26 50L21 46Z" fill="#d99d7e"/>
   <!-- face -->
   <path d="M8.5 16C11 8 22 6 26 10C29.5 16 31.5 26 30.5 32C28.5 38 24 41 20 40.5C14 39 9.5 31 8 24Z" fill="#d79a77"/>
   <path d="M12 13C17 9.5 24 9.5 26.5 13L27.5 18.5L14 20Z" fill="#e0a987"/>
   <!-- hair -->
   <path d="M3.2 20C1.5 11 9 3 18 2C23 1.6 25.5 5 27.5 13C23.5 8.5 18.5 8.5 13.5 11.5C10.5 13.5 9.8 17 9.6 24C6.5 24 4.2 23 3.2 20Z" fill="#553621"/>
   <path d="M6.5 11C10 6 15 4.4 20 4.6" stroke="#8a5f3c" stroke-width="1.4" fill="none"/>
   <!-- brows / eyes -->
   <path d="M12 21.6L18 19.6M22.6 18.8L28.2 17.4" stroke="#4f3220" stroke-width="1.3" fill="none"/>
   <path d="M13.5 23.8L17.5 22.9M23.6 21.4L27.4 20.5" stroke="#5e3d2d" stroke-width="1.2" fill="none"/>
   <path d="M20.5 22L22.5 27" stroke="#c48564" stroke-width="1" fill="none"/>
   <!-- beard -->
   <path d="M10 27C11.5 35 16 41.5 21.5 42C27.5 42.4 31.5 37 32 26C30.5 31.5 28.5 35.5 24.5 36.4C19.5 37.4 14 33.5 10 27Z" fill="#3f2a1e"/>
   <path d="M18 29.6C21 27.2 26 26.6 29.4 28.2C28.6 32 25.6 34.6 22.4 34.4C19.8 34.2 18.4 32 18 29.6Z" fill="#8a5843"/>
   <path d="M20 30.8C22.6 29.9 25.6 29.6 27.8 30.1C26.8 31.6 24.6 32.4 22.6 32.2C21.4 32 20.4 31.6 20 30.8Z" fill="#ead6c8"/>
   <path d="M19.6 27.2C22 25.2 26 25 28.8 26.6" stroke="#55362a" stroke-width="1.7" fill="none"/>
   <path d="M22 36Q24 35 26 36L25 38H23Z" fill="#6c7a3a" opacity=".55"/>
   <!-- hand + phone -->
   <path d="M5.5 24.5L8.5 24L9.8 32L7.5 33.5Z" fill="#2b5a47"/>
   <path d="M9.5 29.5L13 33.5L16 40L18 47L11 50L6 44L7 36Z" fill="#e1ad8f"/>
   <path d="M8 36.5L14 38.5M7.5 40.5L14 42.5" stroke="#c98f72" stroke-width=".9" fill="none"/>
   <circle cx="16" cy="39.8" r="1.3" fill="#a8434a"/>
   <path d="M9.8 31L12.4 38.5" stroke="#2a2a2a" stroke-width="1.1"/>
  </g>
 </g>
</svg>

</div>
<div id="rstrip"></div><div id="corner"></div>

</div>
</body>
</html>
